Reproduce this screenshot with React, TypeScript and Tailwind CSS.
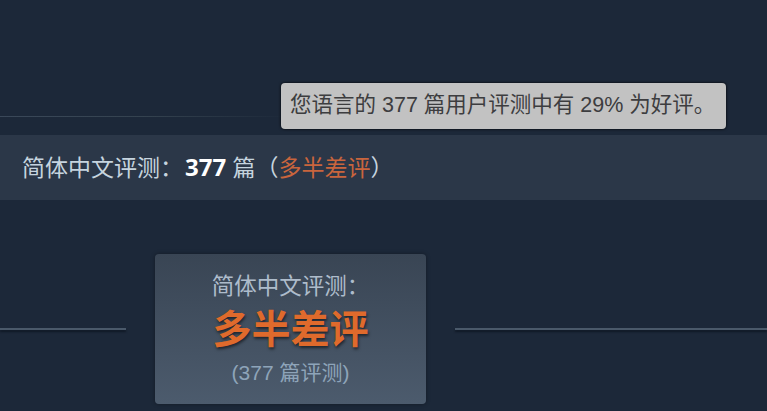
import React from 'react'

const FONT = '"Liberation Sans", "Noto Sans CJK SC", sans-serif'

function ReviewBand() {
  return (
    <div className="h-[65px] bg-[#2b3748] flex items-center pl-[22px]">
      <span className="text-[23px] text-[#c6d4df] leading-none whitespace-pre">
        简体中文评测：<b className="text-white font-bold font-['Open_Sans'] text-[24px] ml-[2px]">377</b> 篇（
        <span className="text-[#c9653d]">多半差评</span>）
      </span>
    </div>
  )
}

function SummaryCard() {
  return (
    <div className="w-[271px] h-[150px] rounded-[4px] bg-gradient-to-b from-[#394554] to-[#4c5b6d] shadow-[0_0_4px_rgba(0,0,0,0.35)] flex flex-col items-center pt-[20px]">
      <div className="text-[22.5px] leading-[26px] text-[#aebccb]">简体中文评测：</div>
      <div className="mt-[7px] text-[39px] leading-[46px] font-bold text-[#df6a2c] [text-shadow:1px_2px_3px_rgba(0,0,0,0.55)]">
        多半差评
      </div>
      <div className="mt-[8px] text-[21px] leading-[24px] text-[#8ea4b9]">(377 篇评测)</div>
    </div>
  )
}

export default function App() {
  return (
    <div className="w-[767px] h-[411px] bg-[#1c2839] overflow-hidden relative" style={{ fontFamily: FONT }}>
      {/* top area with faint divider */}
      <div className="h-[135px] flex flex-col justify-end pb-[18px]">
        <div className="h-px w-[290px] bg-gradient-to-r from-[#3a4859] via-[#34424f] to-transparent" />
      </div>

      <ReviewBand />

      {/* summary row */}
      <div className="flex items-center pt-[54px]">
        <div className="w-[126px] h-[2px] bg-[#4a596a] shadow-[0_2px_2px_rgba(10,18,28,0.7)]" />
        <div className="mx-[29px]">
          <SummaryCard />
        </div>
        <div className="flex-1 h-[2px] bg-[#4a596a] shadow-[0_2px_2px_rgba(10,18,28,0.7)]" />
      </div>

      {/* tooltip */}
      <div className="absolute left-[281px] top-[83px] w-[445px] h-[46px] rounded-[4px] bg-[#c2c2c2] shadow-[0_0_3px_#000] flex items-center pl-[9px]">
        <span className="text-[21.5px] leading-none text-[#3d3d3f] whitespace-nowrap">
          您语言的 377 篇用户评测中有 29% 为好评。
        </span>
      </div>
    </div>
  )
}
